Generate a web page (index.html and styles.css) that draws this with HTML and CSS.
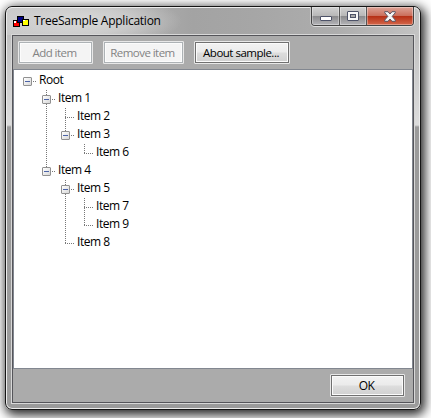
FILE: index.html
```html
<!DOCTYPE html>
<html lang="en">
<head>
<meta charset="utf-8">
<title>TreeSample Application</title>
<link rel="stylesheet" href="styles.css">
</head>
<body>
<div class="window">
  <header class="titlebar">
    <svg class="app-icon" width="16" height="11" viewBox="0 0 16 11" shape-rendering="crispEdges">
      <rect x="0" y="4" width="7" height="7"/><rect x="1" y="5" width="5" height="5" fill="#f00"/><rect x="1" y="5" width="2" height="2" fill="#fff"/>
      <rect x="4" y="0" width="7" height="7"/><rect x="5" y="1" width="5" height="5" fill="#000084"/>
      <rect x="9" y="3" width="7" height="7"/><rect x="10" y="4" width="5" height="5" fill="#ff0"/><rect x="10" y="4" width="2" height="1" fill="#fff"/>
    </svg>
    <h1 class="title">TreeSample Application</h1>
    <div class="caption">
      <span class="cap min"><svg width="12" height="5"><rect x=".5" y=".5" width="11" height="4" rx=".5" fill="#fff" stroke="#4d5268"/></svg></span>
      <span class="cap max"><svg width="12" height="10"><rect x=".5" y=".5" width="11" height="9" rx=".5" fill="#f8f8f8" stroke="#4d5268"/><rect x="3.5" y="3.5" width="5" height="3" fill="#aaa" stroke="#4d5268"/></svg></span>
      <span class="cap close"><svg width="12" height="11" viewBox="0 0 12 11"><path d="M.7.7H4L6 3 8 .7h3.3v1L8.2 5.4l3.1 3.7v1.2H8L6 8l-2 2.3H.7V9.1l3.1-3.7L.7 1.7z" fill="#f6f6f6" stroke="#585361"/></svg></span>
    </div>
  </header>
  <main class="client">
    <div class="toolbar">
      <button class="btn" disabled>Add item</button>
      <button class="btn remove" disabled>Remove item</button>
      <button class="btn about">About sample...</button>
    </div>
    <div class="tree">
      <div class="row"><i class="g box"></i><span>Root</span></div>
      <div class="row"><i class="g"></i><i class="g up down box"></i><span>Item 1</span></div>
      <div class="row"><i class="g"></i><i class="g up down"></i><i class="g up down arm"></i><span>Item 2</span></div>
      <div class="row"><i class="g"></i><i class="g up down"></i><i class="g up box"></i><span>Item 3</span></div>
      <div class="row"><i class="g"></i><i class="g up down"></i><i class="g"></i><i class="g up arm"></i><span>Item 6</span></div>
      <div class="row"><i class="g"></i><i class="g up box"></i><span>Item 4</span></div>
      <div class="row"><i class="g"></i><i class="g"></i><i class="g up down box"></i><span>Item 5</span></div>
      <div class="row"><i class="g"></i><i class="g"></i><i class="g up down"></i><i class="g up down arm"></i><span>Item 7</span></div>
      <div class="row"><i class="g"></i><i class="g"></i><i class="g up down"></i><i class="g up arm"></i><span>Item 9</span></div>
      <div class="row"><i class="g"></i><i class="g"></i><i class="g up arm"></i><span>Item 8</span></div>
    </div>
    <footer class="footer"><button class="btn ok">OK</button></footer>
  </main>
</div>
</body>
</html>
```
FILE: styles.css
```css
*, *::before, *::after { box-sizing: border-box; }
html { background: #fff; }
body {
  margin: 0;
  width: 431px;
  height: 418px;
  padding: 6px 0 0 5px;
  overflow: hidden;
  font: 12px "Open Sans", "Noto Sans", sans-serif;
  color: #000;
}
.window {
  display: flex;
  flex-direction: column;
  width: 416px;
  height: 404px;
  padding: 0 6px 6px;
  border: 1px solid #141414;
  border-radius: 7px;
  background: linear-gradient(#b8b8b8 0, #c4c4c4 40px, #dcdcdc 118px, #9b9b9b 120px, #9b9b9b);
  box-shadow: inset 0 0 0 1px #ececec, 2px 3px 11px 2px rgba(0, 0, 0, .85);
}
.titlebar {
  display: flex;
  flex: none;
  height: 28px;
  margin: 0 -5px;
  padding-left: 6px;
  border-top: 1px solid #ececec;
  border-radius: 6px 6px 0 0;
  background:
    radial-gradient(ellipse 100px 26px at 75px 13px, rgba(220, 220, 220, .9) 0, rgba(215, 215, 215, .65) 50%, rgba(210, 210, 210, 0)),
    linear-gradient(90deg, #c8c8c8, #a3a3a3 45%, #a6a6a6 60%, #adadad 80%, #c3c3c3);
}
.app-icon { margin-top: 8px; }
.title {
  margin: 4px 0 0 5px;
  font-size: 12px;
  font-weight: 400;
  line-height: 18px;
  letter-spacing: -.25px;
  white-space: nowrap;
}
.caption {
  display: flex;
  width: 103px;
  height: 19px;
  margin: -1px 5px 0 auto;
  border: 1px solid #444;
  border-top: 0;
  border-radius: 0 0 4px 4px;
  box-shadow: 0 1px 0 #ddd, 1px 0 0 #ddd, -1px 0 0 #c8c8c8;
  overflow: hidden;
}
.cap {
  display: flex;
  align-items: center;
  justify-content: center;
  border-right: 1px solid #555;
  background: linear-gradient(#d1d1d1, #b8b8b8 48%, #8b8b8d 52%, #b4b4b8);
  box-shadow: inset 0 0 0 1px rgba(255, 255, 255, .35);
}
.min { width: 28px; padding-top: 4px; }
.max { width: 27px; }
.close {
  width: 46px;
  border: 0;
  background: linear-gradient(#dea498, #cb6f5c 48%, #b63016 52%, #d4684b);
}
.client {
  display: flex;
  flex: 1;
  flex-direction: column;
  border: 1px solid #55555a;
  background: #ababab;
  box-shadow: 0 0 0 1px #d8d8d8;
}
.toolbar { display: flex; gap: 10px; height: 33px; padding: 5px 0 0 5px; }
.btn {
  width: 75px;
  height: 23px;
  padding: 1px 2px 0 0;
  border: 1px solid #e8e8e8;
  border-radius: 1px;
  font: inherit;
  font-size: 11.5px;
  line-height: 16px;
  letter-spacing: -.55px;
  white-space: nowrap;
  color: #000;
  background: linear-gradient(#f3f3f3, #ebebeb 48%, #dddddd 52%, #cfcfcf);
  box-shadow: inset 0 0 0 1px #707070, inset 0 0 0 2px #fbfbfb;
}
.btn:disabled {
  color: #838383;
  background: #f4f4f4;
  box-shadow: inset 0 0 0 1px #adb2b5, inset 0 0 0 2px #fcfcfc;
}
.remove { width: 81px; }
.about { width: 96px; letter-spacing: -.5px; }
.tree {
  height: 300px;
  padding: 2px 0 0 4px;
  border: 1px solid #828790;
  background: #fff;
}
.row { display: flex; height: 18px; }
.row span { margin: -1px 0 0 2px; line-height: 18px; letter-spacing: -.45px; }
.g { position: relative; width: 19px; height: 18px; --dots: repeating-linear-gradient(#777 0 1px, #fff 1px 2px); }
.up { background: var(--dots) 9px 0 / 1px 9px no-repeat; }
.up.down { background-size: 1px 18px; }
.arm::after, .box::after {
  content: "";
  position: absolute;
  left: 9px;
  top: 9px;
  width: 9px;
  height: 1px;
  background: repeating-linear-gradient(90deg, #777 0 1px, #fff 1px 2px);
}
.box::before {
  content: "";
  position: absolute;
  z-index: 1;
  left: 5px;
  top: 5px;
  width: 9px;
  height: 9px;
  border: 1px solid #919191;
  border-radius: 1px;
  background:
    linear-gradient(#4b63a7, #4b63a7) 1px 3px / 5px 1px no-repeat,
    linear-gradient(135deg, #fff, #d8d8d8);
}
.footer { display: flex; justify-content: flex-end; padding: 5px 8px 0 0; }
.ok { font-size: 12px; }
```
